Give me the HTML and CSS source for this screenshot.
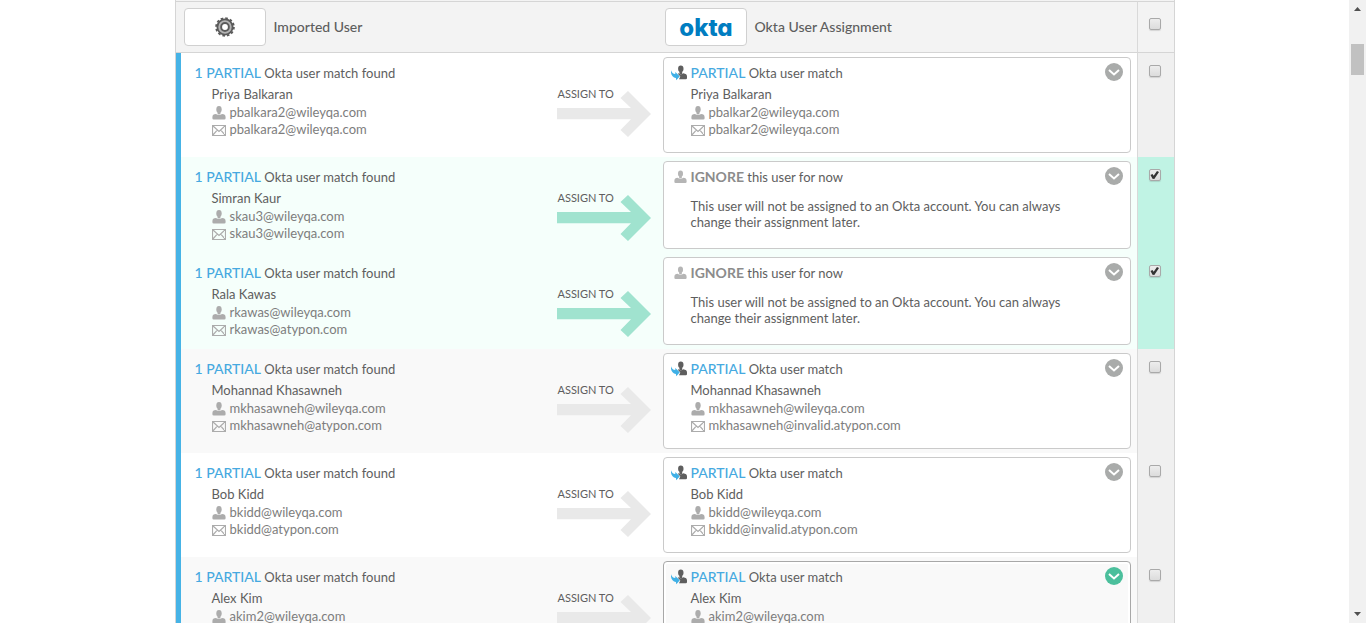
FILE: index.html
```
<!DOCTYPE html>
<html lang="en">
<head>
<meta charset="utf-8">
<title>Import users</title>
<link rel="stylesheet" href="styles.css">
</head>
<body>
<svg class="sprite" aria-hidden="true">
  <symbol id="user" viewBox="0 0 14 14"><ellipse cx="7" cy="3.4" rx="2.7" ry="3.4"/><path d="M5.6 6h2.8v2.4H5.6z"/><path d="M0.4 11.2C0.4 8.8 1.6 8.2 4 7.9C5.6 9.3 8.4 9.3 10 7.9C12.400 8.200 13.600 8.800 13.600 11.200V12.200Q13.600 13.500 12.300 13.500H1.700Q0.400 13.500 0.400 12.200Z"/></symbol>
  <symbol id="mail" viewBox="0 0 14 14"><path d="M.5 2.500h13v10H.5zM.5 2.500L7 8.500l6.500-6M.5 12.500l4.700-5.300M13.500 12.500L8.800 7.200" fill="none" stroke="currentColor" stroke-width="1.200"/></symbol>
  <symbol id="match" viewBox="0 0 16 16"><g fill="#5e5e5e"><ellipse cx="9.800" cy="3.800" rx="2.700" ry="3.300"/><path d="M8.400 6h2.800v3H8.400z"/><path d="M7.500 8.300C8.800 9.600 10.900 9.600 12.200 8.200C15 8.600 16 9.500 16 11.500V13Q16 14.200 14.800 14.200H8L9.300 11.500L6.800 8.800Z"/></g><path fill="#3fb0e6" d="M0 5.300C.7 7.600 2 8.800 4.300 9.100V7.100L8.800 11.200L5.300 15.300L4.900 13.100C1.500 12.600-.5 9.800 0 5.300Z"/></symbol>
  <symbol id="arrow" viewBox="0 0 94 46"><path d="M71 0L94 23L71 46L63.500 39L74 28.300H0V17H74L63.500 7Z"/></symbol>
  <symbol id="chevron" viewBox="0 0 18 18"><path d="M4 7l5 4.500L14 7" fill="none" stroke="#fff" stroke-width="2"/></symbol>
</svg>
<div class="window">
<main class="page">
<table class="matches">
  <colgroup><col><col class="col-assign"><col class="col-okta"><col class="col-check"></colgroup>
  <thead>
    <tr>
      <th colspan="2" scope="col"><div class="heading"><span class="logo"><svg width="20" height="20" viewBox="0 0 20 20"><circle cx="10" cy="10" r="8.900" fill="none" stroke="#5a5a5a" stroke-width="1.800" stroke-dasharray="2.600 2.060"/><circle cx="10" cy="10" r="6" fill="none" stroke="#b4b4b4" stroke-width="3"/><circle cx="10" cy="10" r="7.600" fill="none" stroke="#5a5a5a" stroke-width="1.800"/><circle cx="10" cy="10" r="3.900" fill="#fff" stroke="#5a5a5a" stroke-width="2"/></svg></span>Imported User</div></th>
      <th scope="col"><div class="heading"><span class="logo"><svg width="60" height="32" role="img" aria-label="okta"><text class="wordmark" x="30" y="25" text-anchor="middle">okta</text></svg></span>Okta User Assignment</div></th>
      <th class="check" scope="col"><input type="checkbox" aria-label="Select all users"></th>
    </tr>
  </thead>
  <tbody>
    <tr>
      <td class="source"><p class="title"><strong>1 PARTIAL</strong> Okta user match found</p>
        <div class="person"><p class="name">Priya Balkaran</p><p class="line"><svg class="icon"><use href="#user"/></svg>pbalkara2@wileyqa.com</p><p class="line"><svg class="icon"><use href="#mail"/></svg>pbalkara2@wileyqa.com</p></div></td>
      <td><div class="assign"><span>ASSIGN TO</span><svg class="arrow"><use href="#arrow"/></svg></div></td>
      <td class="target"><div class="card"><div class="card-head"><svg class="kind"><use href="#match"/></svg><p class="title"><strong>PARTIAL</strong> Okta user match</p><button type="button" class="more" aria-label="Change assignment"><svg><use href="#chevron"/></svg></button></div>
        <div class="person"><p class="name">Priya Balkaran</p><p class="line"><svg class="icon"><use href="#user"/></svg>pbalkar2@wileyqa.com</p><p class="line"><svg class="icon"><use href="#mail"/></svg>pbalkar2@wileyqa.com</p></div></div></td>
      <td class="check"><input type="checkbox" aria-label="Select Priya Balkaran"></td>
    </tr>
    <tr class="selected">
      <td class="source"><p class="title"><strong>1 PARTIAL</strong> Okta user match found</p>
        <div class="person"><p class="name">Simran Kaur</p><p class="line"><svg class="icon"><use href="#user"/></svg>skau3@wileyqa.com</p><p class="line"><svg class="icon"><use href="#mail"/></svg>skau3@wileyqa.com</p></div></td>
      <td><div class="assign"><span>ASSIGN TO</span><svg class="arrow"><use href="#arrow"/></svg></div></td>
      <td class="target"><div class="card ignore"><div class="card-head"><svg class="kind"><use href="#user" x="3" width="13" height="14" y="1"/></svg><p class="title"><strong>IGNORE</strong> this user for now</p><button type="button" class="more" aria-label="Change assignment"><svg><use href="#chevron"/></svg></button></div>
        <p class="note">This user will not be assigned to an Okta account. You can always change their assignment later.</p></div></td>
      <td class="check"><input type="checkbox" checked aria-label="Select Simran Kaur"></td>
    </tr>
    <tr class="selected">
      <td class="source"><p class="title"><strong>1 PARTIAL</strong> Okta user match found</p>
        <div class="person"><p class="name">Rala Kawas</p><p class="line"><svg class="icon"><use href="#user"/></svg>rkawas@wileyqa.com</p><p class="line"><svg class="icon"><use href="#mail"/></svg>rkawas@atypon.com</p></div></td>
      <td><div class="assign"><span>ASSIGN TO</span><svg class="arrow"><use href="#arrow"/></svg></div></td>
      <td class="target"><div class="card ignore"><div class="card-head"><svg class="kind"><use href="#user" x="3" width="13" height="14" y="1"/></svg><p class="title"><strong>IGNORE</strong> this user for now</p><button type="button" class="more" aria-label="Change assignment"><svg><use href="#chevron"/></svg></button></div>
        <p class="note">This user will not be assigned to an Okta account. You can always change their assignment later.</p></div></td>
      <td class="check"><input type="checkbox" checked aria-label="Select Rala Kawas"></td>
    </tr>
    <tr class="alt">
      <td class="source"><p class="title"><strong>1 PARTIAL</strong> Okta user match found</p>
        <div class="person"><p class="name">Mohannad Khasawneh</p><p class="line"><svg class="icon"><use href="#user"/></svg>mkhasawneh@wileyqa.com</p><p class="line"><svg class="icon"><use href="#mail"/></svg>mkhasawneh@atypon.com</p></div></td>
      <td><div class="assign"><span>ASSIGN TO</span><svg class="arrow"><use href="#arrow"/></svg></div></td>
      <td class="target"><div class="card"><div class="card-head"><svg class="kind"><use href="#match"/></svg><p class="title"><strong>PARTIAL</strong> Okta user match</p><button type="button" class="more" aria-label="Change assignment"><svg><use href="#chevron"/></svg></button></div>
        <div class="person"><p class="name">Mohannad Khasawneh</p><p class="line"><svg class="icon"><use href="#user"/></svg>mkhasawneh@wileyqa.com</p><p class="line"><svg class="icon"><use href="#mail"/></svg>mkhasawneh@invalid.atypon.com</p></div></div></td>
      <td class="check"><input type="checkbox" aria-label="Select Mohannad Khasawneh"></td>
    </tr>
    <tr>
      <td class="source"><p class="title"><strong>1 PARTIAL</strong> Okta user match found</p>
        <div class="person"><p class="name">Bob Kidd</p><p class="line"><svg class="icon"><use href="#user"/></svg>bkidd@wileyqa.com</p><p class="line"><svg class="icon"><use href="#mail"/></svg>bkidd@atypon.com</p></div></td>
      <td><div class="assign"><span>ASSIGN TO</span><svg class="arrow"><use href="#arrow"/></svg></div></td>
      <td class="target"><div class="card"><div class="card-head"><svg class="kind"><use href="#match"/></svg><p class="title"><strong>PARTIAL</strong> Okta user match</p><button type="button" class="more" aria-label="Change assignment"><svg><use href="#chevron"/></svg></button></div>
        <div class="person"><p class="name">Bob Kidd</p><p class="line"><svg class="icon"><use href="#user"/></svg>bkidd@wileyqa.com</p><p class="line"><svg class="icon"><use href="#mail"/></svg>bkidd@invalid.atypon.com</p></div></div></td>
      <td class="check"><input type="checkbox" aria-label="Select Bob Kidd"></td>
    </tr>
    <tr class="alt">
      <td class="source"><p class="title"><strong>1 PARTIAL</strong> Okta user match found</p>
        <div class="person"><p class="name">Alex Kim</p><p class="line"><svg class="icon"><use href="#user"/></svg>akim2@wileyqa.com</p></div></td>
      <td><div class="assign"><span>ASSIGN TO</span><svg class="arrow"><use href="#arrow"/></svg></div></td>
      <td class="target"><div class="card active"><div class="card-head"><svg class="kind"><use href="#match"/></svg><p class="title"><strong>PARTIAL</strong> Okta user match</p><button type="button" class="more" aria-label="Change assignment"><svg><use href="#chevron"/></svg></button></div>
        <div class="person"><p class="name">Alex Kim</p><p class="line"><svg class="icon"><use href="#user"/></svg>akim2@wileyqa.com</p></div></div></td>
      <td class="check"><input type="checkbox" aria-label="Select Alex Kim"></td>
    </tr>
  </tbody>
</table>
</main>
<div class="scrollbar" aria-hidden="true">
  <svg width="17" height="17"><path d="M5 11L8.500 7L12 11Z"/></svg>
  <div class="track"><div class="thumb"></div></div>
  <svg width="17" height="17"><path d="M5 6L8.500 10L12 6Z"/></svg>
</div>
</div>
</body>
</html>
```
FILE: styles.css
```
* { box-sizing: border-box; }
body {
  margin: 0;
  background: #fff;
  color: #5e5e5e;
  font: 13px/16px Lato, "Liberation Sans", sans-serif;
}
p { margin: 0; }
svg { display: block; flex: none; }
.sprite { position: absolute; width: 0; height: 0; }
.window { display: flex; height: 100vh; overflow: hidden; }
.page { flex: 1; padding: 0 24px; }

.matches {
  width: 100%;
  max-width: 1000px;
  margin: 0 auto;
  table-layout: fixed;
  border-collapse: separate;
  border-spacing: 0;
  border: solid #d5d5d5;
  border-width: 0 1px;
  padding-top: 1px;
  background: #f3f3f3;
}
.col-assign { width: 106px; }
.col-okta { width: 474px; }
.col-check { width: 37px; }

th, td { padding: 0; vertical-align: top; }
th {
  background: #f3f3f3;
  border: solid #d5d5d5;
  border-width: 1px 0;
  text-align: left;
}
.heading {
  display: flex;
  align-items: center;
  gap: 8px;
  padding: 6px 8px;
  font-size: 14px;
  font-weight: 500;
}
th:nth-child(2) .heading { padding-left: 2px; }
.logo {
  display: flex;
  align-items: center;
  justify-content: center;
  width: 82px;
  height: 38px;
  border: 1px solid #d0d0d0;
  border-radius: 4px;
  background: #fff;
}
.wordmark {
  fill: #007dc1;
  font: 800 24px Inter, sans-serif;
  font-feature-settings: "cv11";
}

td { background: #fff; }
.alt td { background: #f9f9f9; }
.selected td { background: #f5fffb; }
.source {
  border-left: 5px solid #46b3e6;
  padding: 12px 0 0 14px;
}
.title strong { color: #46a9e0; font-size: 14px; font-weight: 500; }
.person { padding: 3px 0 0 17px; }
.name { line-height: 20px; }
.line {
  display: flex;
  align-items: center;
  gap: 4px;
  line-height: 17px;
  color: #7d7d7d;
}
.icon { width: 14px; height: 14px; fill: #acacac; color: #acacac; }

.assign {
  display: grid;
  padding: 34px 0 0 1px;
  font-size: 11px;
  line-height: 14px;
}
.assign > * { grid-area: 1 / 1; }
.arrow { width: 94px; height: 46px; margin-top: 4px; fill: #e9e9e9; }
.selected .arrow { fill: #a0e3cf; }

.target { padding: 4px 6px 4px 0; }
.card {
  padding: 5px 7px 14px;
  border: 1px solid #cacaca;
  border-radius: 4px;
  background: #fff;
}
.card-head { display: flex; align-items: center; gap: 4px; }
.card-head .title { flex: 1; padding-top: 2px; }
.kind { width: 16px; height: 16px; margin-top: 2px; fill: #b5b5b5; }
.ignore .title strong { color: #8c8c8c; font-weight: 700; }
.card .person { padding-left: 20px; }
.ignore { padding-bottom: 18px; }
.note { max-width: 420px; padding: 13px 0 0 20px; }
.active { border-color: #a8a8a8; background: #f9f9f9; box-shadow: inset 0 0 0 2px #fff; }

.more {
  width: 18px;
  height: 18px;
  padding: 0;
  border: 0;
  border-radius: 50%;
  background: #a9abaa;
}
.more svg { width: 18px; height: 18px; }
.active .more { background: #4bbf9c; }

.matches .check { border-left: 1px solid #d9d9d9; padding: 12px 0 0 11px; }
td.check, .alt td.check { background: #f0f0f0; }
.selected td.check { background: #c0f3e4; }
.matches th.check { padding-top: 16px; background: #f3f3f3; }
input {
  display: block;
  appearance: none;
  width: 12px;
  height: 12px;
  margin: 0;
  border: 1px solid #a9a9a9;
  border-radius: 2px;
  background: linear-gradient(#ededed, #dcdcdc);
  box-shadow: 0 1px 1px #00000020;
}
input:checked::before {
  content: "";
  display: block;
  width: 10px;
  height: 10px;
  background: #333;
  clip-path: polygon(10% 50%, 30% 40%, 42% 58%, 75% 10%, 95% 20%, 48% 90%, 30% 88%);
}

.scrollbar { display: flex; flex-direction: column; width: 17px; background: #f1f1f1; fill: #505050; }
.track { flex: 1; padding: 27px 2px 0; }
.thumb { height: 31px; background: #c1c1c1; }
```
